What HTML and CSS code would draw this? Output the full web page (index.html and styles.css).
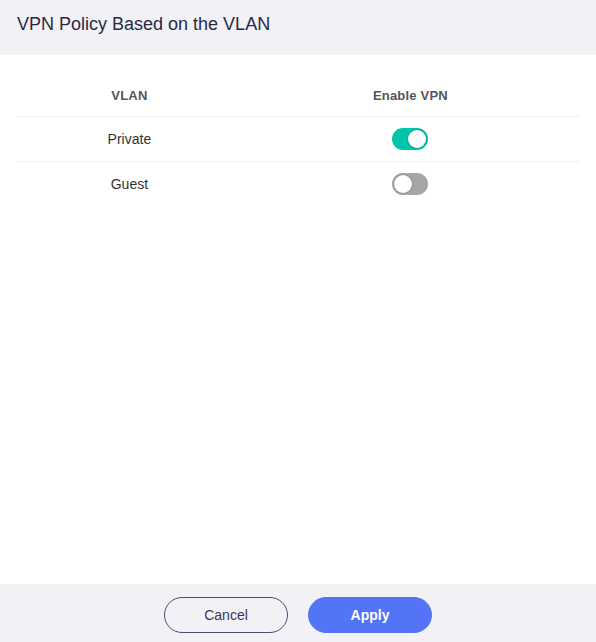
FILE: index.html
```html
<!DOCTYPE html>
<html>
<head>
<meta charset="utf-8">
<link rel="stylesheet" href="styles.css">
</head>
<body>
<div class="dialog">
  <div class="header">VPN Policy Based on the VLAN</div>
  <div class="content">
    <table class="grid">
      <thead>
        <tr><th class="c1">VLAN</th><th class="c2">Enable VPN</th></tr>
      </thead>
      <tbody>
        <tr><td><span class="lbl">Private</span></td><td><span class="switch on"><span class="knob"></span></span></td></tr>
        <tr class="last"><td><span class="lbl">Guest</span></td><td><span class="switch"><span class="knob"></span></span></td></tr>
      </tbody>
    </table>
  </div>
  <div class="footer">
    <button class="btn cancel">Cancel</button>
    <button class="btn apply">Apply</button>
  </div>
</div>
</body>
</html>
```
FILE: styles.css
```css
html, body { margin: 0; padding: 0; }
body { font-family: "Liberation Sans", Arial, sans-serif; background: #fff; }
.dialog { width: 596px; height: 642px; display: flex; flex-direction: column; }
.header { height: 55px; box-sizing: border-box; background: #f1f1f6; padding: 13px 17px 0; font-size: 18px; color: #2a2a44; line-height: 22px; }
.content { flex: 1; padding: 0 17px; }
.grid { width: 100%; border-collapse: collapse; margin-top: 20px; }
.grid th { font-size: 13px; font-weight: bold; color: #555; height: 41px; padding: 0; border-bottom: 1px solid #f0f0f0; vertical-align: middle; letter-spacing: 0.2px; }
.grid .c1 { width: 40%; }
.grid td { font-size: 14px; color: #333; height: 44px; padding: 0; text-align: center; border-bottom: 1px solid #f0f0f0; vertical-align: middle; }
.grid tr.last td { border-bottom: none; }
.switch { display: inline-block; position: relative; width: 36px; height: 22px; border-radius: 11px; background: #a5a5a5; vertical-align: middle; }
.switch .knob { position: absolute; top: 2px; left: 2px; width: 18px; height: 18px; border-radius: 50%; background: #fff; box-shadow: 0 0 2px rgba(0,0,0,0.35); }
.switch.on { background: #00c5aa; }
.switch.on .knob { left: 16px; }
.footer { height: 58px; background: #f1f1f6; display: flex; justify-content: center; align-items: flex-start; gap: 20px; padding-top: 13px; box-sizing: border-box; }
.btn { width: 124px; height: 36px; border-radius: 18px; font-family: "Liberation Sans", Arial, sans-serif; font-size: 14px; cursor: pointer; padding: 0; }
.cancel { background: transparent; border: 1px solid #4b4a78; color: #3a3a5a; }
.apply { background: #5474f7; border: 1px solid #5474f7; color: #fff; font-weight: bold; }
```
